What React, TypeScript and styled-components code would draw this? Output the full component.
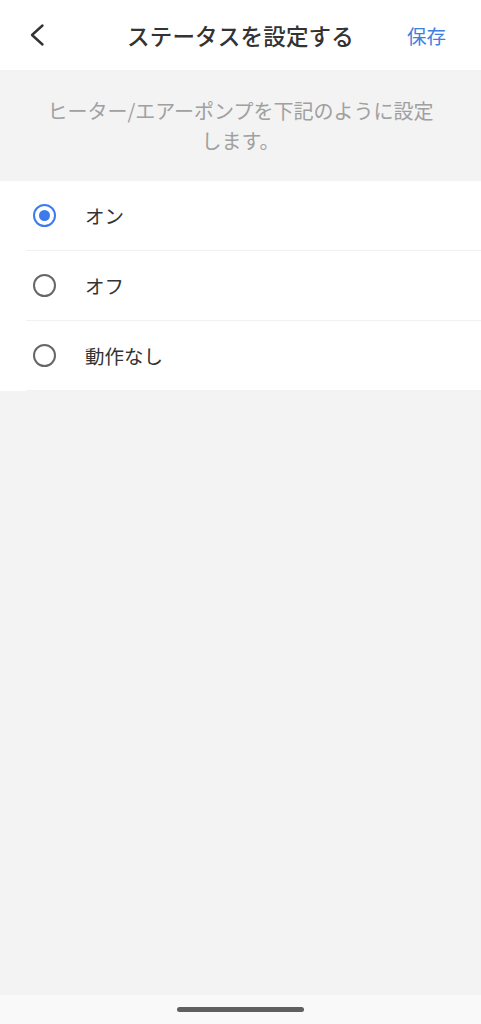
import React, { useState } from "react";
import styled, { createGlobalStyle } from "styled-components";

const GlobalStyle = createGlobalStyle`
  html, body {
    margin: 0;
    padding: 0;
    background: #f3f3f3;
  }
  body {
    font-family: "Noto Sans CJK JP", "Noto Sans", sans-serif;
  }
  * { box-sizing: border-box; }
`;

const Page = styled.div`
  display: flex;
  flex-direction: column;
  min-height: 100vh;
  background: #f3f3f3;
`;

const Header = styled.header`
  display: flex;
  align-items: center;
  height: 70px;
  background: #ffffff;
`;

const Side = styled.div<{ $align: "left" | "right" }>`
  width: 80px;
  display: flex;
  justify-content: ${(p) => (p.$align === "left" ? "flex-start" : "flex-end")};
  padding: ${(p) => (p.$align === "left" ? "0 0 0 26px" : "0 35px 0 0")};
`;

const BackButton = styled.button`
  border: 0;
  background: none;
  padding: 0;
  display: flex;
  cursor: pointer;
`;

const Title = styled.h1`
  flex: 1;
  margin: 0;
  text-align: center;
  font-size: 22.5px;
  font-weight: 500;
  color: #333333;
  letter-spacing: 0.2px;
`;

const SaveButton = styled.button`
  border: 0;
  background: none;
  padding: 0;
  font-family: inherit;
  font-size: 19.5px;
  color: #3e7ee0;
  cursor: pointer;
`;

const Notice = styled.p`
  margin: 0;
  padding: 26px 40px 25px;
  text-align: center;
  font-size: 20px;
  line-height: 30px;
  color: #a0a0a0;
`;

const List = styled.ul`
  list-style: none;
  margin: 0;
  padding: 0;
  background: #ffffff;
`;

const Row = styled.li`
  display: flex;
  align-items: center;
  height: 70px;
  margin-left: 26px;
  border-bottom: 1px solid #f1f1f1;
  cursor: pointer;
`;

const Radio = styled.span<{ $checked: boolean }>`
  width: 23px;
  height: 23px;
  margin-left: 7px;
  border-radius: 50%;
  border: 2.3px solid ${(p) => (p.$checked ? "#3e7bea" : "#666666")};
  display: flex;
  align-items: center;
  justify-content: center;
  &::after {
    content: "";
    width: 11px;
    height: 11px;
    border-radius: 50%;
    background: #3e7bea;
    display: ${(p) => (p.$checked ? "block" : "none")};
  }
`;

const Label = styled.span`
  margin-left: 29px;
  font-size: 19.5px;
  color: #333333;
`;

const Filler = styled.div`
  flex: 1;
`;

const NavBar = styled.div`
  height: 29px;
  background: #f9f9f9;
  display: flex;
  align-items: center;
  justify-content: center;
`;

const HomeIndicator = styled.div`
  width: 127px;
  height: 5px;
  border-radius: 3px;
  background: #606060;
`;

const options = ["オン", "オフ", "動作なし"];

export default function App() {
  const [selected, setSelected] = useState(0);
  return (
    <Page>
      <GlobalStyle />
      <Header>
        <Side $align="left">
          <BackButton aria-label="戻る">
            <svg width="24" height="24" viewBox="0 0 24 24" fill="none">
              <path
                d="M16.5 2.5 L6 12 L16.5 21.5"
                stroke="#333"
                strokeWidth="2.4"
                strokeLinecap="round"
                strokeLinejoin="round"
              />
            </svg>
          </BackButton>
        </Side>
        <Title>ステータスを設定する</Title>
        <Side $align="right">
          <SaveButton>保存</SaveButton>
        </Side>
      </Header>
      <Notice>ヒーター/エアーポンプを下記のように設定します。</Notice>
      <List>
        {options.map((o, i) => (
          <Row key={o} onClick={() => setSelected(i)}>
            <Radio $checked={selected === i} />
            <Label>{o}</Label>
          </Row>
        ))}
      </List>
      <Filler />
      <NavBar>
        <HomeIndicator />
      </NavBar>
    </Page>
  );
}
